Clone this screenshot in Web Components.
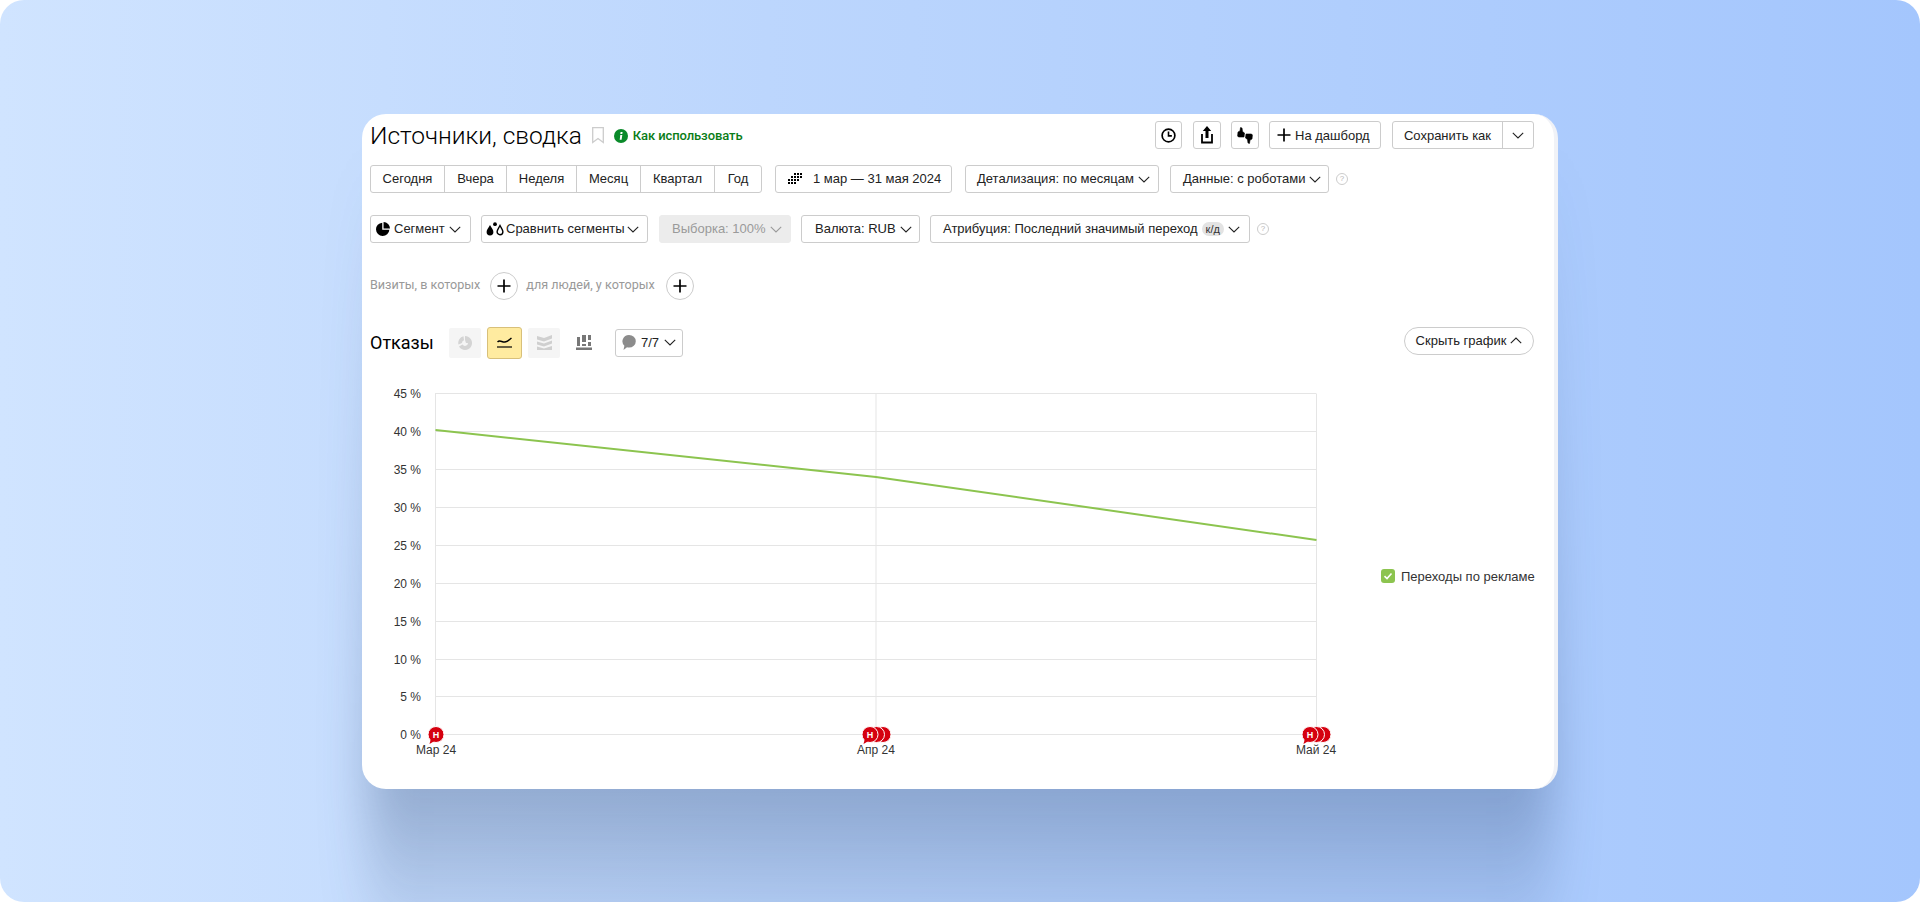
<!DOCTYPE html>
<html lang="ru">
<head>
<meta charset="utf-8">
<title>Источники, сводка</title>
<style>
  html, body { margin: 0; height: 100%; background: #fff; }
  body { font-family: "Liberation Sans", Arial, sans-serif; }
</style>
</head>
<body>
<ym-page>
  <ym-card>
    <ym-row top="0" style="height:27px">
      <ym-title>Источники, сводка</ym-title>
      <ym-btn w="27" icon="clock" center style="margin-left:auto"></ym-btn>
      <ym-btn w="28" icon="share" center style="margin-left:11px"></ym-btn>
      <ym-btn w="28" icon="thumbs" center style="margin-left:10px"></ym-btn>
      <ym-btn w="112" icon="plus" pad="7" style="margin-left:10px">На дашборд</ym-btn>
      <ym-split style="margin-left:11px">Сохранить как</ym-split>
    </ym-row>

    <ym-row top="16">
      <ym-seg>
        <span style="width:74px">Сегодня</span><span style="width:62px">Вчера</span><span style="width:70px">Неделя</span><span style="width:64px">Месяц</span><span style="width:74px">Квартал</span><span style="width:46px">Год</span>
      </ym-seg>
      <ym-btn w="177" icon="grid" pad="12" style="margin-left:13px">1 мар — 31 мая 2024</ym-btn>
      <ym-btn w="194" chevron pad="11" style="margin-left:13px">Детализация: по месяцам</ym-btn>
      <ym-btn w="159" chevron pad="12" style="margin-left:11px">Данные: с роботами</ym-btn>
      <ym-help style="margin-left:7px"></ym-help>
    </ym-row>

    <ym-row top="22">
      <ym-btn w="101" icon="pie" chevron pad="5">Сегмент</ym-btn>
      <ym-btn w="167" icon="drops" chevron pad="4" gap="2" style="margin-left:10px">Сравнить сегменты</ym-btn>
      <ym-btn w="132" chevron disabled pad="12" style="margin-left:11px">Выборка: 100%</ym-btn>
      <ym-btn w="119" chevron pad="13" style="margin-left:10px">Валюта: RUB</ym-btn>
      <ym-btn w="320" chevron badge="к/д" pad="12" style="margin-left:10px">Атрибуция: Последний значимый переход</ym-btn>
      <ym-help style="margin-left:7px"></ym-help>
    </ym-row>

    <ym-row top="29">
      <ym-hint>Визиты, в которых</ym-hint>
      <ym-add style="margin-left:10px"></ym-add>
      <ym-hint style="margin-left:8px">для людей, у которых</ym-hint>
      <ym-add style="margin-left:11px"></ym-add>
    </ym-row>

    <ym-chart-head></ym-chart-head>
    <ym-chart></ym-chart>
  </ym-card>
</ym-page>

<script>
// Иконки, общие для всех кнопок
const ICONS = {
  clock: `<svg width="15" height="15" viewBox="0 0 16 16"><circle cx="8" cy="8" r="6.800" fill="none" stroke="#000" stroke-width="1.800"/><path d="M8 3.800v4.600h3.600" fill="none" stroke="#000" stroke-width="1.700"/></svg>`,
  share: `<svg width="14" height="18" viewBox="0 0 14 18"><path d="M7 0 11.200 5H8.500v7h-3V5H2.800z" fill="#000"/><path d="M2 8v8.500h10V8" fill="none" stroke="#000" stroke-width="1.800"/></svg>`,
  thumbs: `<svg width="16" height="17" viewBox="0 0 16 17" fill="#000" stroke="#000" stroke-width=".6" stroke-linejoin="round"><path d="M1 5 3 4 3.500.6 5 1 5.500 4.500 7.500 6 7 10H1.500L.6 9z"/><path d="M15 12 13 13 12.500 16.400 11 16 10.500 12.500 8.500 11 9 7H14.500L15.400 8z"/></svg>`,
  plus: `<svg width="14" height="14" viewBox="0 0 14 14"><path d="M7 .5v13M.5 7h13" stroke="#000" stroke-width="1.700"/></svg>`,
  grid: `<svg width="14" height="11" viewBox="0 0 14 11" fill="#000"><path d="M6 0h2v2H6zM9 0h2v2H9zM12 0h2v2h-2zM3 3h2v2H3zM6 3h2v2H6zM9 3h2v2H9zM12 3h2v2h-2zM0 6h2v2H0zM3 6h2v2H3zM6 6h2v2H6zM9 6h2v2H9zM0 9h2v2H0zM3 9h2v2H3zM6 9h2v2H6z"/></svg>`,
  pie: `<svg width="14" height="14" viewBox="0 0 13 13" fill="#000"><path d="M5.800 0.600V7.200H12.400A6.200 6.200 0 1 1 5.800 0.600z"/><path d="M7 0A6 6 0 0 1 13 6H7z"/></svg>`,
  drops: `<svg width="18" height="14" viewBox="0 0 18 14"><path d="M4 3C2.500 6 .6 7.600.6 10a3.400 3.400 0 0 0 6.800 0C7.400 7.600 5.500 6 4 3z" fill="#000"/><path d="M14 3.500c-1.300 2.600-2.900 4.100-2.900 6.300a2.900 2.900 0 0 0 5.800 0c0-2.200-1.600-3.700-2.900-6.300z" fill="#fff" stroke="#000" stroke-width="1.400"/><circle cx="9" cy="2.200" r="1.900" fill="#000"/></svg>`
};

const CHEVRON = `<svg class="chev" width="12" height="7" viewBox="0 0 12 7"><path d="M.8.8 6 6l5.200-5.200" fill="none" stroke="currentColor" stroke-width="1.100"/></svg>`;

// Главный фон страницы
class YmPage extends HTMLElement {
  constructor() {
    super();
    this.attachShadow({ mode: "open" }).innerHTML = `
      <style>
        :host {
          display: flex;
          align-items: center;
          justify-content: center;
          height: 902px;
          overflow: hidden;
          isolation: isolate;
          border-radius: 24px;
          background: linear-gradient(90deg, #d0e4ff 0%, #bcd6fd 40%, #a4c6fd 100%);
        }
      </style>
      <slot></slot>`;
  }
}

// Белая карточка отчёта, тень под ней рисуем размытым блоком
class YmCard extends HTMLElement {
  constructor() {
    super();
    this.attachShadow({ mode: "open" }).innerHTML = `
      <style>
        :host {
          display: flex;
          flex-direction: column;
          position: relative;
          box-sizing: border-box;
          width: 1196px;
          height: 675px;
          padding: 8px 20px 0 8px;
          background: #fff;
          border-right: 4px solid #f0f2f7;
          border-radius: 24px;
          font: 13px "Liberation Sans", Arial, sans-serif;
          color: #222;
        }
        :host::before {
          content: "";
          position: absolute;
          z-index: -1;
          left: 6px;
          right: 2px;
          top: 36px;
          bottom: -161px;
          background: linear-gradient(180deg,
            rgba(30, 55, 100, 0) 0%,
            rgba(30, 55, 100, .1) 20%,
            rgba(30, 55, 100, .3) 79%,
            rgba(30, 55, 100, .09) 94%,
            rgba(30, 55, 100, .04) 100%);
          filter: blur(24px);
        }
      </style>
      <slot></slot>`;
  }
}

class YmRow extends HTMLElement {
  constructor() {
    super();
    this.attachShadow({ mode: "open" }).innerHTML = `
      <style>
        :host { display: flex; align-items: center; height: 28px; flex: none; }
      </style>
      <slot></slot>`;
  }
  connectedCallback() {
    this.style.marginTop = (this.getAttribute("top") || 0) + "px";
  }
}

class YmTitle extends HTMLElement {
  constructor() {
    super();
    this.attachShadow({ mode: "open" }).innerHTML = `
      <style>
        :host { display: flex; align-items: center; height: 30px; margin-top: 1px; }
        h1 { margin: 0; font: 300 24.500px Roboto, sans-serif; color: #000; }
        .mark { margin-left: 10px; }
        .info { margin-left: 10px; }
        a { margin-left: 5px; font: 500 13px Roboto, sans-serif; color: #0a7d17; letter-spacing: -.1px; }
      </style>
      <h1><slot></slot></h1>
      <svg class="mark" width="12" height="17" viewBox="0 0 12 17"><path d="M.7.7h10.600v14.800L6 11.600.7 15.500z" fill="none" stroke="#ccc" stroke-width="1.300"/></svg>
      <svg class="info" width="14" height="14" viewBox="0 0 14 14"><circle cx="7" cy="7" r="7" fill="#0a8a2a"/><path d="M6.300 6h2L7.600 10.800H5.700zM6.600 3h2l-.3 1.900h-2z" fill="#fff"/></svg>
      <a>Как использовать</a>`;
  }
}

// Обычная кнопка: иконка, текст, бейдж, стрелка
class YmBtn extends HTMLElement {
  constructor() {
    super();
    this.attachShadow({ mode: "open" });
  }
  connectedCallback() {
    const icon = this.getAttribute("icon");
    const badge = this.getAttribute("badge");
    const disabled = this.hasAttribute("disabled");
    const center = this.hasAttribute("center");
    const gap = this.getAttribute("gap") || 4;
    this.shadowRoot.innerHTML = `
      <style>
        :host {
          display: inline-flex;
          align-items: center;
          justify-content: ${center ? "center" : "flex-start"};
          gap: ${gap}px;
          box-sizing: border-box;
          flex: none;
          height: 28px;
          padding-left: ${this.getAttribute("pad") || 0}px;
          border: 1px solid ${disabled ? "#ececec" : "#ccc"};
          border-radius: 3px;
          background: ${disabled ? "#ececec" : "#fff"};
          color: ${disabled ? "#9a9a9a" : "#222"};
          white-space: nowrap;
        }
        svg { display: block; flex: none; }
        .chev { color: ${disabled ? "#9a9a9a" : "#222"}; margin-top: 1px; }
        .badge { padding: 1px 4px; border-radius: 7px; background: #e3e3e3; font-size: 11px; color: #333; }
      </style>
      ${icon ? ICONS[icon] : ""}<slot></slot>
      ${badge ? `<span class="badge">${badge}</span>` : ""}
      ${this.hasAttribute("chevron") ? CHEVRON : ""}`;
    this.style.width = this.getAttribute("w") + "px";
    if (icon === "grid") this.shadowRoot.querySelector("svg").style.marginRight = "7px";
  }
}

class YmSplit extends HTMLElement {
  constructor() {
    super();
    this.attachShadow({ mode: "open" }).innerHTML = `
      <style>
        :host {
          display: inline-flex;
          box-sizing: border-box;
          width: 142px;
          height: 28px;
          border: 1px solid #ccc;
          border-radius: 3px;
          white-space: nowrap;
        }
        .main { flex: none; width: 109px; display: flex; align-items: center; justify-content: center; border-right: 1px solid #ccc; }
        .arrow { flex: 1; display: flex; align-items: center; justify-content: center; color: #222; }
      </style>
      <div class="main"><slot></slot></div>
      <div class="arrow">${CHEVRON}</div>`;
  }
}

// Группа периодов
class YmSeg extends HTMLElement {
  constructor() {
    super();
    this.attachShadow({ mode: "open" }).innerHTML = `
      <style>
        :host {
          display: inline-flex;
          box-sizing: border-box;
          height: 28px;
          border: 1px solid #ccc;
          border-radius: 3px;
        }
        ::slotted(span) {
          display: flex;
          align-items: center;
          justify-content: center;
          box-sizing: border-box;
          border-right: 1px solid #ccc;
        }
        ::slotted(span:last-child) { border-right: 0; }
      </style>
      <slot></slot>`;
  }
}

class YmHelp extends HTMLElement {
  constructor() {
    super();
    this.attachShadow({ mode: "open" }).innerHTML = `
      <style>
        :host { display: inline-flex; align-items: center; justify-content: center; box-sizing: border-box; width: 12px; height: 12px; border: 1px solid #ccc; border-radius: 50%; color: #b5b5b5; font-size: 8px; }
      </style>?`;
  }
}

class YmHint extends HTMLElement {
  constructor() {
    super();
    this.attachShadow({ mode: "open" }).innerHTML = `
      <style>
        :host { display: inline-block; margin-top: -3px; font: 12.600px Roboto, sans-serif; color: #999; }
      </style>
      <slot></slot>`;
  }
}

class YmAdd extends HTMLElement {
  constructor() {
    super();
    this.attachShadow({ mode: "open" }).innerHTML = `
      <style>
        :host { display: inline-flex; align-items: center; justify-content: center; box-sizing: border-box; width: 28px; height: 28px; border: 1px solid #ccc; border-radius: 50%; }
      </style>
      ${ICONS.plus}`;
  }
}

// Заголовок графика: название, типы, примечания, скрыть
class YmChartHead extends HTMLElement {
  constructor() {
    super();
    this.attachShadow({ mode: "open" }).innerHTML = `
      <style>
        :host { display: flex; align-items: center; height: 32px; margin-top: 27px; flex: none; }
        .name { font: 400 18px Roboto, sans-serif; color: #000; width: 79px; }
        .type { display: flex; align-items: center; justify-content: center; box-sizing: border-box; width: 32px; height: 30px; border-radius: 2px; background: #f5f5f5; }
        .type.on { width: 35px; height: 32px; margin: 0 6px; background: #ffeba0; border: 1px solid #d8c07a; border-radius: 3px; }
        .type.plain { background: none; margin-left: 8px; }
        .notes { display: flex; align-items: center; justify-content: center; gap: 5px; box-sizing: border-box; width: 68px; height: 28px; margin-left: 15px; border: 1px solid #ccc; border-radius: 3px; color: #222; }
        .hide { display: flex; align-items: center; justify-content: center; gap: 4px; align-self: flex-start; box-sizing: border-box; width: 130px; height: 28px; margin-left: auto; border: 1px solid #ccc; border-radius: 14px; color: #222; }
        .up { transform: rotate(180deg); display: block; }
        .up svg, .notes svg { display: block; }
      </style>
      <span class="name">Отказы</span>
      <span class="type"><svg width="14" height="14" viewBox="0 0 14 14"><path d="M7 0a7 7 0 1 1-6 10.600l3.500-2A3 3 0 0 0 10 7h-2L7 4z" fill="#d4d4d4"/><path d="M.4 8.400A7 7 0 0 1 5.500.2L6 4.200A3 3 0 0 0 4 7z" fill="#d4d4d4"/></svg></span>
      <span class="type on"><svg width="15" height="11" viewBox="0 0 15 11"><path d="M.5 5C3 2.500 5 5.500 8 5s4-2 6.500-4" fill="none" stroke="#000" stroke-width="1.500"/><path d="M0 10h15" stroke="#000" stroke-width="1.200"/></svg></span>
      <span class="type"><svg width="15" height="15" viewBox="0 0 15 15" fill="#cfcfcf"><path d="M0 1l7 2 8-3v3.500l-8 3-7-2zM0 6.500l7 2 8-3v3l-8 3-7-2zM0 11.500l7 2 8-2.500v4H0z"/></svg></span>
      <span class="type plain"><svg width="16" height="15" viewBox="0 0 16 15" fill="#777"><path d="M1 2h3v9H1zM6 0h4v7H6zM6 9h4v2H6zM12 0h3v5h-3zM12 7h3v4h-3zM0 12.500h16V15H0z"/></svg></span>
      <span class="notes"><svg width="14" height="15" viewBox="0 0 14 15"><path d="M7 0a6.800 6.300 0 0 1 0 12.600q-1 0-2-.3L1.500 15 2.400 10.700A6.800 6.300 0 0 1 7 0z" fill="#8c8c8c"/></svg>7/7 ${CHEVRON}</span>
      <span class="hide">Скрыть график <span class="up">${CHEVRON}</span></span>`;
  }
}

// Сам график: рисуем на SVG
class YmChart extends HTMLElement {
  constructor() {
    super();
    this.attachShadow({ mode: "open" });
  }
  connectedCallback() {
    const left = 65, right = 946, oy = 376;
    const ys = [393.5, 431.5, 469.5, 507.5, 545.5, 583.5, 621.5, 659.5, 696.5, 734.5].map(v => v - oy);
    const xs = [left + .5, (left + right) / 2 + .5, right + .5];
    let out = "";

    ys.forEach((y, i) => {
      out += `<line x1="${left}" x2="${right}" y1="${y}" y2="${y}" stroke="#e5e5e5"/>`;
      out += `<text x="51" y="${y + 4}" text-anchor="end">${(9 - i) * 5} %</text>`;
    });
    xs.forEach(x => {
      out += `<line x1="${x}" x2="${x}" y1="${ys[0]}" y2="${ys[9]}" stroke="#e5e5e5"/>`;
    });

    out += `<polyline points="${xs[0]},54 ${xs[1]},101 ${xs[2]},164" fill="none" stroke="#8cc44f" stroke-width="2"/>`;

    // Метки примечаний поверх оси
    const marker = (cx, n) => {
      let m = "";
      for (let i = n - 1; i >= 0; i--) {
        m += `<circle cx="${cx + i * 6.500}" cy="${ys[9]}" r="8" fill="#d5000f" stroke="#fff" stroke-width="1"/>`;
      }
      m += `<path d="M${cx - 5} ${ys[9] + 4}l-1.500 5.500 5-3z" fill="#d5000f"/>`;
      m += `<text class="n" x="${cx}" y="${ys[9] + 3}" text-anchor="middle">Н</text>`;
      return m;
    };
    out += marker(66, 1) + marker(500, 3) + marker(940, 3);

    ["Мар 24", "Апр 24", "Май 24"].forEach((t, i) => {
      out += `<text x="${[66, 506, 946][i]}" y="${ys[9] + 19}" text-anchor="middle">${t}</text>`;
    });

    this.shadowRoot.innerHTML = `
      <style>
        :host { display: block; position: relative; flex: none; height: 400px; margin-top: 17px; }
        svg { display: block; overflow: visible; }
        text { font: 12px "Liberation Sans", Arial, sans-serif; fill: #333; }
        text.n { font-size: 9px; font-weight: 700; fill: #fff; }
        .legend { position: absolute; left: 1011px; top: 193px; display: flex; align-items: center; gap: 6px; white-space: nowrap; color: #333; }
        .legend svg { flex: none; }
      </style>
      <svg width="1170" height="400">${out}</svg>
      <div class="legend"><svg width="14" height="14" viewBox="0 0 14 14"><rect width="14" height="14" rx="3" fill="#8cc44f"/><path d="M3.500 7.200 6 9.500l4.500-5" fill="none" stroke="#fff" stroke-width="1.600"/></svg>Переходы по рекламе</div>`;
  }
}

customElements.define("ym-page", YmPage);
customElements.define("ym-card", YmCard);
customElements.define("ym-row", YmRow);
customElements.define("ym-title", YmTitle);
customElements.define("ym-btn", YmBtn);
customElements.define("ym-split", YmSplit);
customElements.define("ym-seg", YmSeg);
customElements.define("ym-help", YmHelp);
customElements.define("ym-hint", YmHint);
customElements.define("ym-add", YmAdd);
customElements.define("ym-chart-head", YmChartHead);
customElements.define("ym-chart", YmChart);
</script>
</body>
</html>
